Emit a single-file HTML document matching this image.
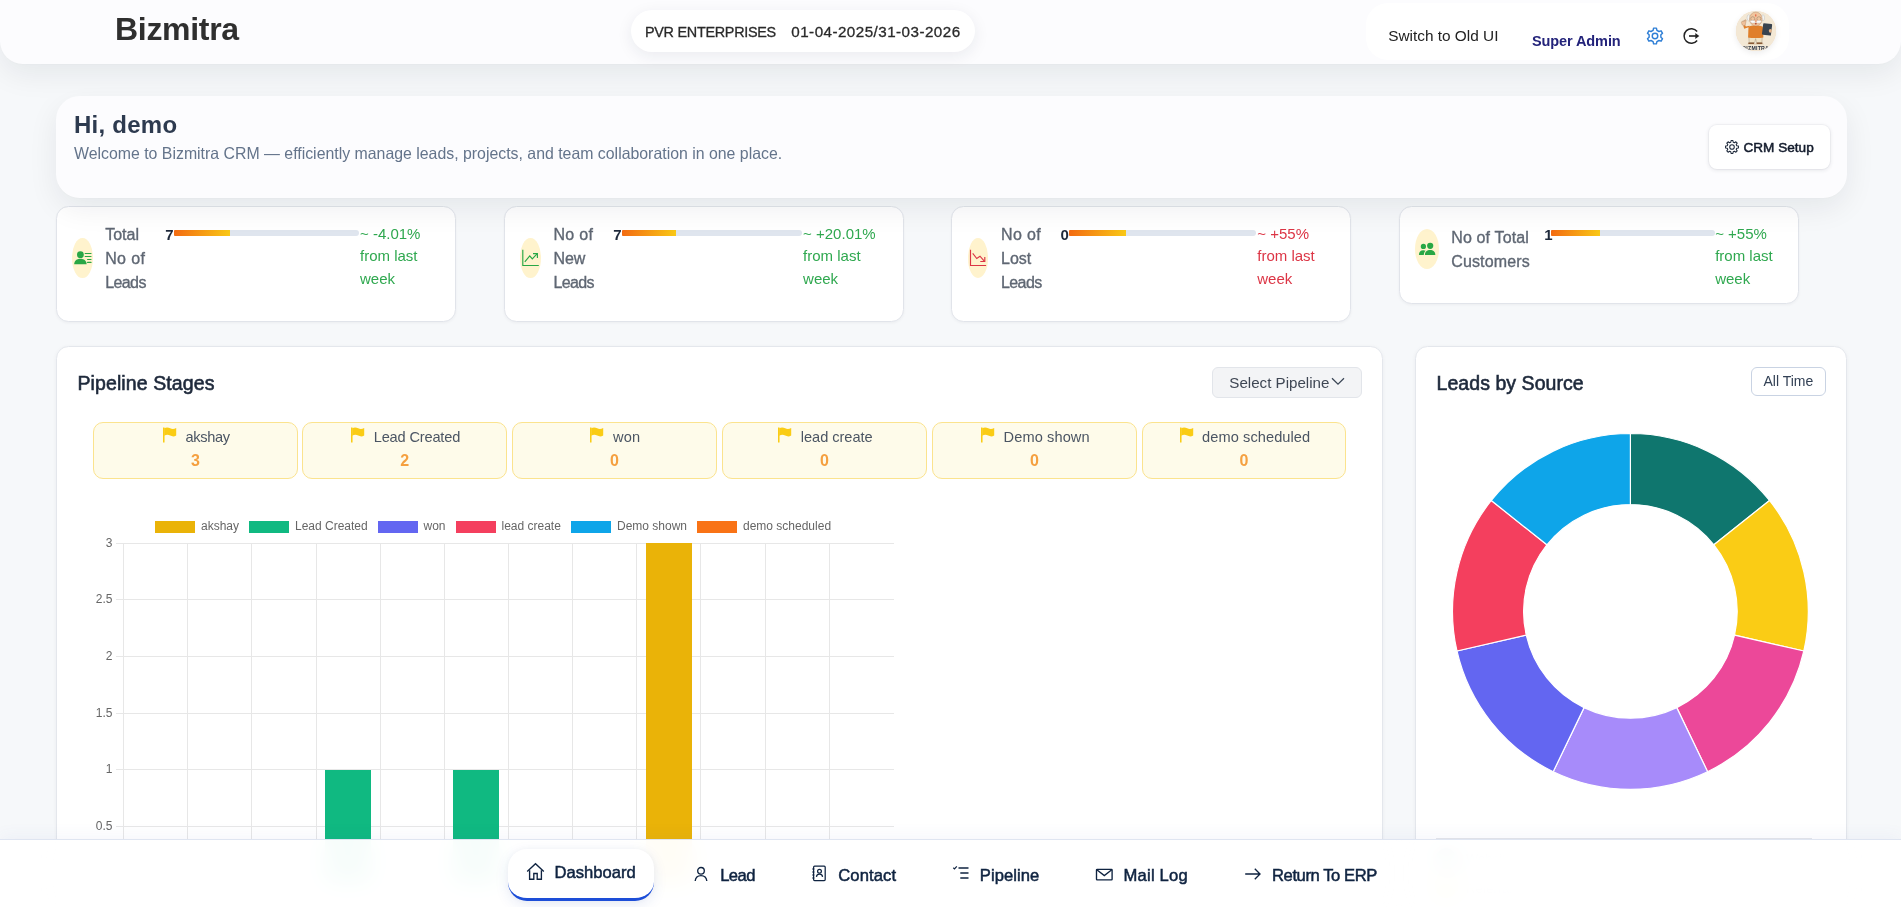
<!DOCTYPE html>
<html lang="en">
<head>
<meta charset="utf-8">
<title>Bizmitra CRM</title>
<style>
*{box-sizing:border-box;margin:0;padding:0}
html,body{width:1901px;height:907px;overflow:hidden}
body{font-family:"Liberation Sans",sans-serif;background:#f6f8fa;color:#1e293b;position:relative;will-change:opacity}
.abs{position:absolute}
/* header */
#hdr{position:absolute;left:0;top:0;width:1901px;height:64px;background:#fcfcfe;border-radius:0 0 23px 23px;box-shadow:0 10px 30px rgba(20,25,40,.075),0 1px 3px rgba(20,25,35,.02)}
#brand{position:absolute;left:115px;top:10px;font-size:32px;font-weight:700;color:#2f2f2f;letter-spacing:-.3px;line-height:38px}
#pill{position:absolute;left:631.300px;top:10.300px;width:344px;height:41.800px;border-radius:21px;background:#fff;box-shadow:0 4px 16px rgba(30,41,59,.08)}
#pill span{position:absolute;top:12.600px;font-size:14.4px;line-height:18px;color:#2a2a2a;white-space:nowrap;-webkit-text-stroke:.3px #2a2a2a}
#rbox{position:absolute;left:1366px;top:3px;width:423px;height:57px;border-radius:22px;background:#fff}
#sw{position:absolute;left:1388.200px;top:26.800px;font-size:15.38px;line-height:18px;color:#222;white-space:nowrap}
#sa{position:absolute;left:1532px;top:31.800px;letter-spacing:-.1px;font-size:14.5px;font-weight:700;line-height:18px;color:#23237a;white-space:nowrap}
#av{position:absolute;left:1736px;top:11px;width:40px;height:40px;border-radius:50%;background:#f6dcc0;overflow:hidden;box-shadow:0 2px 6px rgba(0,0,0,.08)}
/* welcome */
#wel{z-index:2;position:absolute;left:56px;top:96px;width:1790.600px;height:102px;border-radius:24px;background:#fcfcfe;box-shadow:0 10px 30px rgba(20,25,40,.075),0 1px 3px rgba(20,25,35,.02)}
#wel h1{position:absolute;left:18px;top:14px;letter-spacing:.25px;font-size:24px;line-height:30px;font-weight:700;color:#2d3a4f;white-space:nowrap}
#wel p{position:absolute;left:18px;top:48.800px;font-size:15.87px;line-height:18px;color:#64748b;white-space:nowrap}
#crm{position:absolute;left:1652.900px;top:29px;width:121.300px;height:43.500px;border-radius:8px;background:#fff;box-shadow:0 1px 4px rgba(30,41,59,.12),0 0 0 1px rgba(30,41,59,.03)}
#crm span{position:absolute;left:34.600px;top:13.900px;font-size:13.6px;font-weight:400;color:#131b2c;-webkit-text-stroke:.5px #131b2c;line-height:18px;white-space:nowrap}
/* stats */
.st{position:absolute;top:205.900px;width:400px;height:116px;border-radius:12.500px;background:#fff;border:1px solid #e1e4ea;box-shadow:0 1px 3px rgba(30,41,59,.05)}
.st .ov{position:absolute;left:15.200px;top:31px;width:20.800px;height:40px;border-radius:50%;background:#fff3cd}
.st .lb{position:absolute;left:48.100px;top:16.100px;font-size:16px;line-height:24px;color:#5f6773;font-weight:400;white-space:nowrap;-webkit-text-stroke:.35px #5f6773}
.st .nm{position:absolute;left:108.200px;top:19.100px;font-size:15px;font-weight:700;line-height:18px;color:#1e293b}
.st .bar{position:absolute;left:116.600px;top:22.900px;width:185px;height:6.200px;border-radius:1px 3px 3px 1px;background:#dfe5ee;overflow:hidden}
.st .bar i{display:block;height:7px;width:30.3%;background:linear-gradient(90deg,#f36b12,#f9c816)}
.st .ch{position:absolute;left:302.900px;top:16.100px;font-size:15px;line-height:22.5px;color:#2fa84f;white-space:nowrap}
.st.red .ch{color:#dc3545}

/* pipeline */
#pipe{position:absolute;left:56.100px;top:346.100px;width:1326.600px;height:600px;border-radius:12.500px;background:#fff;border:1px solid #e4e7ec;box-shadow:0 1px 4px rgba(30,41,59,.05)}
.ttl{position:absolute;font-size:19.5px;line-height:24px;color:#1e293b;white-space:nowrap;-webkit-text-stroke:.6px #1e293b}
#sel{position:absolute;left:1154.900px;top:19.900px;width:149.800px;height:30.600px;border-radius:6px;background:#f3f4f6;border:1px solid #e2e5ea}
#sel span{position:absolute;left:16.300px;top:5.800px;font-size:15.15px;line-height:18px;color:#3f4754;white-space:nowrap}
.sg{position:absolute;top:74.800px;width:204.6px;height:57px;border-radius:10px;background:#fefbea;border:1px solid #fbe38e;text-align:center}
.sg .r1{position:absolute;left:2px;right:0;top:4.300px;height:20px;font-size:14.6px;line-height:20px;color:#4b5563;white-space:nowrap}
.sg .r1 .fl{display:inline-block;vertical-align:top;margin-top:.1px;margin-right:8.500px}
.sg .r2{position:absolute;left:0;right:0;top:28.200px;font-size:16px;line-height:20px;font-weight:700;color:#f5a040}

/* source */
#src{position:absolute;left:1415.200px;top:346.100px;width:431.600px;height:600px;border-radius:12.500px;background:#fff;border:1px solid #e4e7ec;box-shadow:0 1px 4px rgba(30,41,59,.05)}
#allt{position:absolute;left:334.700px;top:19.700px;width:75px;height:29px;border-radius:6px;border:1px solid #c9d3e3;background:#fff;font-size:14px;line-height:27px;text-align:center;color:#334155}

/* nav */
#nav{position:absolute;left:0;top:839px;width:1901px;height:68px;background:rgba(255,255,255,.965);border-top:1px solid #dfe5f1;backdrop-filter:blur(12px);-webkit-backdrop-filter:blur(12px);box-shadow:0 -5px 14px rgba(70,100,190,.045)}
#dash{position:absolute;left:508px;top:848.500px;width:146px;height:52px;border-radius:19px;background:#fff;border-bottom:3px solid #1d4ed8;box-shadow:0 4px 14px rgba(30,64,175,.10),0 0 8px rgba(30,41,59,.04)}
.nt{position:absolute;font-size:16.6px;line-height:20px;color:#0f2340;white-space:nowrap;-webkit-text-stroke:.5px #0f2340}
#lg{position:absolute;left:1436px;top:838px;width:376px;height:80px;border-top:1px solid #e5e7eb}
.li{position:absolute;left:0;height:22px}
.li i{position:absolute;left:0;top:0;width:20px;height:20px;border-radius:50%}
.li span{position:absolute;left:30px;top:3px;font-size:13px;line-height:16px;color:#475569;white-space:nowrap}
</style>
</head>
<body>
<div id="hdr">
  <div id="brand">Bizmitra</div>
  <div id="pill"><span style="left:13.700px;letter-spacing:-.28px">PVR ENTERPRISES</span><span style="left:160px;font-size:15.2px;letter-spacing:.46px">01-04-2025/31-03-2026</span></div>
  <div id="rbox"></div>
  <div id="sw">Switch to Old UI</div>
  <div id="sa">Super Admin</div>
  <!--HI--><svg class="abs" style="left:1643.7px;top:24.900px" width="22" height="22" viewBox="0 0 22 22" fill="none" stroke="#2f7fd6" stroke-width="1.45" stroke-linejoin="round"><path d="M9.09 5.31L9.58 3.13L12.42 3.13L12.91 5.31L14.97 6.50L17.11 5.84L18.53 8.29L16.88 9.81L16.88 12.19L18.53 13.71L17.11 16.16L14.97 15.50L12.91 16.69L12.42 18.87L9.58 18.87L9.09 16.69L7.03 15.50L4.89 16.16L3.47 13.71L5.12 12.19L5.12 9.81L3.47 8.29L4.89 5.84L7.03 6.50Z"/><circle cx="11" cy="11" r="2.750"/></svg><svg class="abs" style="left:1680px;top:24.900px" width="24" height="22" viewBox="0 0 24 22" fill="none" stroke="#222" stroke-width="1.45"><path d="M17.15 6.51A7.3 7.3 0 1 0 17.15 15.49"/><path d="M9 11h8.500" stroke-width="1.6"/><path d="M15.300 8.100l4 2.900-4 2.900z" fill="#222" stroke="none"/></svg><!--/HI--><div id="av"><svg width="40" height="40" viewBox="0 0 40 40">
<rect width="40" height="40" fill="#f3e8d5"/>
<ellipse cx="19.700" cy="33" rx="8.500" ry="1" fill="#e6d6bb"/>
<path d="M12.800 26h13.400l-.3 5.600h-5.400l-.9-4-.9 4h-5.500z" fill="#efe3c6" stroke="#8b7b62" stroke-width=".35"/>
<path d="M12.300 31.400h5.800v1.500h-5.800zM20.600 31.400h5.800v1.500h-5.800z" fill="#8a5a35"/>
<path d="M12.500 15.800c2-1.600 12.200-1.600 14.300 0l.6 10.600c-4 .9-11.300.9-15.300 0z" fill="#e07f2a"/>
<path d="M13.200 16l-5 1.700-1-3.100 1.800-.5.900 1.300 3.700-.6z" fill="#e07f2a"/>
<path d="M5.400 11.200c.5-1.300 1.500-1.300 1.800-.2l.6-1.700c.5-.4 1 .2.900 1l.6-1.600c.6-.3 1 .4.800 1.200l-.9 4.300c-1.400.9-2.900.3-3.300-1z" fill="#efc19b" stroke="#9a6b45" stroke-width=".3"/>
<rect x="26.600" y="12.600" width="9" height="11.600" rx=".8" transform="rotate(7 31 18)" fill="#38434f"/>
<ellipse cx="34.300" cy="19.800" rx="1.500" ry="1.900" fill="#e6b48a"/>
<ellipse cx="12.600" cy="6.800" rx="1.500" ry="3" fill="#f4f4f2" stroke="#9aa0a6" stroke-width=".3"/>
<ellipse cx="27" cy="6.800" rx="1.500" ry="3" fill="#f4f4f2" stroke="#9aa0a6" stroke-width=".3"/>
<ellipse cx="19.800" cy="8" rx="6.400" ry="7" fill="#f0c59e" stroke="#9a6b45" stroke-width=".3"/>
<rect x="19.300" y="3.200" width="1" height="2.400" rx=".5" fill="#e24a2c"/>
<circle cx="16.700" cy="7.700" r="2" fill="none" stroke="#7a6a58" stroke-width=".4"/>
<circle cx="22.900" cy="7.700" r="2" fill="none" stroke="#7a6a58" stroke-width=".4"/>
<path d="M14 10.200c1.500-1.300 4.200-1 5.800.3 1.600-1.300 4.300-1.600 5.800-.3-.8 2.200-3.800 2.400-5.800 1-2 1.400-5 1.200-5.800-1z" fill="#fafafa" stroke="#a9a29a" stroke-width=".25"/>
<ellipse cx="19.800" cy="9.700" rx="1" ry="1.600" fill="#e8a987"/>
<ellipse cx="19.800" cy="12.700" rx="1" ry=".8" fill="#b4432f"/>
<text x="19.700" y="39.200" font-family="Liberation Sans, sans-serif" font-weight="700" font-size="5.200" text-anchor="middle" fill="#27303f" letter-spacing=".25">BIZMITRA</text>
</svg></div>
</div>

<div id="wel">
  <h1>Hi, demo</h1>
  <p>Welcome to Bizmitra CRM — efficiently manage leads, projects, and team collaboration in one place.</p>
  <div id="crm"><svg class="abs" style="left:14.500px;top:12.600px" width="18" height="18" viewBox="0 0 18 18" fill="none" stroke="#1e293b" stroke-width="1.050" stroke-linejoin="round"><path d="M7.78 4.25L8.08 2.56L9.92 2.56L10.22 4.25L11.49 4.78L12.90 3.80L14.20 5.10L13.22 6.51L13.75 7.78L15.44 8.08L15.44 9.92L13.75 10.22L13.22 11.49L14.20 12.90L12.90 14.20L11.49 13.22L10.22 13.75L9.92 15.44L8.08 15.44L7.78 13.75L6.51 13.22L5.10 14.20L3.80 12.90L4.78 11.49L4.25 10.22L2.56 9.92L2.56 8.08L4.25 7.78L4.78 6.51L3.80 5.10L5.10 3.80L6.51 4.78Z"/><circle cx="9" cy="9" r="2.300"/></svg><span>CRM Setup</span></div>
</div>

<div class="st" style="left:56.100px">
  <div class="ov"></div><svg class="abs" style="left:14.900px;top:42.100px" width="22" height="18" viewBox="72 249 22 18"><circle cx="80.400" cy="254.700" r="3.400" fill="#28a745"/><path d="M74.200 264.200c0-3.300 2.600-5.500 6.200-5.500s6.200 2.200 6.200 5.500z" fill="#28a745"/><path d="M85.200 253.500h5.800M85.200 256.500h5.800M87.600 259.500h3.400M87.600 262.400h3.400" stroke="#28a745" stroke-width="1.200" stroke-linecap="round"/></svg>
  <div class="lb">Total<br><span style="letter-spacing:.35px">No of</span><br><span style="letter-spacing:-.6px">Leads</span></div>
  <div class="nm">7</div><div class="bar"><i></i></div>
  <div class="ch">~ -4.01%<br>from last<br>week</div>
</div>
<div class="st" style="left:503.800px">
  <div class="ov"></div><svg class="abs" style="left:15.200px;top:41.100px" width="22" height="20" viewBox="520 248 22 20" fill="none" stroke="#28a745" stroke-width="1.150"><path d="M522.800 249.800v15.700h16"/><path d="M524.800 261.800l4.950-6 2.550 3.100 4.700-5"/><path d="M533 253.600h4.400v4.400" stroke-linejoin="miter"/></svg>
  <div class="lb" style="left:48.600px"><span style="letter-spacing:.35px">No of</span><br>New<br><span style="letter-spacing:-.6px">Leads</span></div>
  <div class="nm" style="left:108.500px">7</div><div class="bar" style="left:117px;width:180.200px"><i></i></div>
  <div class="ch" style="left:298.300px">~ +20.01%<br>from last<br>week</div>
</div>
<div class="st red" style="left:951.400px">
  <div class="ov"></div><svg class="abs" style="left:14.600px;top:41.100px" width="22" height="20" viewBox="967 248 22 20" fill="none" stroke="#dc3545" stroke-width="1.150"><path d="M970.500 249.800v15.700h15.600"/><path d="M972.700 253.300l4.050 5.200 3.250-2.300 4.500 5.200"/><path d="M980.300 261.500h4.500v-4.500" stroke-linejoin="miter"/></svg>
  <div class="lb" style="left:48.600px"><span style="letter-spacing:.35px">No of</span><br>Lost<br><span style="letter-spacing:-.6px">Leads</span></div>
  <div class="nm">0</div><div class="bar" style="width:186.800px"><i></i></div>
  <div class="ch" style="left:304.900px">~ +55%<br>from last<br>week</div>
</div>
<div class="st" style="left:1399.400px;height:98.400px" id="st4">
  <div class="ov" style="top:21.800px;left:14.600px;width:24px"></div><svg class="abs" style="left:14.600px;top:32.100px" width="24" height="18" viewBox="1415 239 24 18"><circle cx="1423.400" cy="246.400" r="2.600" fill="#28a745"/><path d="M1418.900 254.900c0-2.900 1.700-4.700 4.400-4.700.9 0 1.700.2 2.300.6-1.100 1-1.700 2.400-1.800 4.100z" fill="#28a745"/><circle cx="1430.200" cy="245.800" r="3.100" fill="#28a745"/><path d="M1424.900 254.900c0-2.900 2.100-4.800 5.200-4.800s5.200 1.900 5.200 4.800z" fill="#28a745"/></svg>
  <div class="lb" style="top:19.100px;left:50.800px;letter-spacing:.15px">No of Total<br>Customers</div>
  <div class="nm" style="left:143.800px">1</div><div class="bar" style="left:150.400px;width:164px"><i></i></div>
  <div class="ch" style="left:314.800px">~ +55%<br>from last<br>week</div>
</div>

<div id="pipe">
  <div class="ttl" style="left:20.400px;top:24.300px;letter-spacing:.1px">Pipeline Stages</div>
  <div id="sel"><span>Select Pipeline</span><svg width="14" height="9" viewBox="0 0 14 9" style="position:absolute;left:118.500px;top:9.300px"><path d="M1 1.200l6 6 6-6" fill="none" stroke="#3b4656" stroke-width="1.25"/></svg></div>
<div class="sg" style="left:35.70px;width:205.30px"><div class="r1"><svg class="fl" width="14" height="16" viewBox="0 0 14 16"><path d="M0.6 0.4v15.2" stroke="#facc15" stroke-width="1.9" fill="none"/><path d="M1.2 1.3c2.3-1.3 4.2-.9 6 0s3.700 1.0 6-.3v7.600c-2.3 1.300-4.200.9-6 0s-3.700-1.200-6 .2z" fill="#facc15"/></svg><span style="letter-spacing:-0.327px">akshay</span></div><div class="r2">3</div></div>
<div class="sg" style="left:245.40px;width:204.40px"><div class="r1"><svg class="fl" width="14" height="16" viewBox="0 0 14 16"><path d="M0.6 0.4v15.2" stroke="#facc15" stroke-width="1.9" fill="none"/><path d="M1.2 1.3c2.3-1.3 4.2-.9 6 0s3.700 1.0 6-.3v7.600c-2.3 1.300-4.200.9-6 0s-3.700-1.200-6 .2z" fill="#facc15"/></svg><span style="letter-spacing:-0.165px">Lead Created</span></div><div class="r2">2</div></div>
<div class="sg" style="left:454.80px;width:205.10px"><div class="r1"><svg class="fl" width="14" height="16" viewBox="0 0 14 16"><path d="M0.6 0.4v15.2" stroke="#facc15" stroke-width="1.9" fill="none"/><path d="M1.2 1.3c2.3-1.3 4.2-.9 6 0s3.700 1.0 6-.3v7.600c-2.3 1.300-4.200.9-6 0s-3.700-1.200-6 .2z" fill="#facc15"/></svg><span style="letter-spacing:0.272px">won</span></div><div class="r2">0</div></div>
<div class="sg" style="left:665.10px;width:204.60px"><div class="r1"><svg class="fl" width="14" height="16" viewBox="0 0 14 16"><path d="M0.6 0.4v15.2" stroke="#facc15" stroke-width="1.9" fill="none"/><path d="M1.2 1.3c2.3-1.3 4.2-.9 6 0s3.700 1.0 6-.3v7.600c-2.3 1.300-4.200.9-6 0s-3.700-1.200-6 .2z" fill="#facc15"/></svg><span style="letter-spacing:-0.040px">lead create</span></div><div class="r2">0</div></div>
<div class="sg" style="left:874.90px;width:204.80px"><div class="r1"><svg class="fl" width="14" height="16" viewBox="0 0 14 16"><path d="M0.6 0.4v15.2" stroke="#facc15" stroke-width="1.9" fill="none"/><path d="M1.2 1.3c2.3-1.3 4.2-.9 6 0s3.700 1.0 6-.3v7.600c-2.3 1.300-4.200.9-6 0s-3.700-1.200-6 .2z" fill="#facc15"/></svg><span style="letter-spacing:0.099px">Demo shown</span></div><div class="r2">0</div></div>
<div class="sg" style="left:1084.90px;width:203.90px"><div class="r1"><svg class="fl" width="14" height="16" viewBox="0 0 14 16"><path d="M0.6 0.4v15.2" stroke="#facc15" stroke-width="1.9" fill="none"/><path d="M1.2 1.3c2.3-1.3 4.2-.9 6 0s3.700 1.0 6-.3v7.600c-2.3 1.300-4.200.9-6 0s-3.700-1.200-6 .2z" fill="#facc15"/></svg><span style="letter-spacing:0.076px">demo scheduled</span></div><div class="r2">0</div></div>
</div>
<svg id="chart" class="abs" style="left:0;top:500px" width="1000" height="407" viewBox="0 500 1000 407" shape-rendering="crispEdges" font-family="Liberation Sans, sans-serif">
<line x1="116" x2="893.5" y1="543.5" y2="543.5" stroke="#e7e7e7"/>
<line x1="116" x2="893.5" y1="599.5" y2="599.5" stroke="#e7e7e7"/>
<line x1="116" x2="893.5" y1="656.5" y2="656.5" stroke="#e7e7e7"/>
<line x1="116" x2="893.5" y1="713.5" y2="713.5" stroke="#e7e7e7"/>
<line x1="116" x2="893.5" y1="769.5" y2="769.5" stroke="#e7e7e7"/>
<line x1="116" x2="893.5" y1="826.5" y2="826.5" stroke="#e7e7e7"/>
<line x1="116" x2="893.5" y1="882.5" y2="882.5" stroke="#e7e7e7"/>
<line x1="123.5" x2="123.5" y1="543.5" y2="889" stroke="#e7e7e7"/>
<line x1="187.5" x2="187.5" y1="543.5" y2="889" stroke="#e7e7e7"/>
<line x1="251.5" x2="251.5" y1="543.5" y2="889" stroke="#e7e7e7"/>
<line x1="316.5" x2="316.5" y1="543.5" y2="889" stroke="#e7e7e7"/>
<line x1="380.5" x2="380.5" y1="543.5" y2="889" stroke="#e7e7e7"/>
<line x1="444.5" x2="444.5" y1="543.5" y2="889" stroke="#e7e7e7"/>
<line x1="508.5" x2="508.5" y1="543.5" y2="889" stroke="#e7e7e7"/>
<line x1="572.5" x2="572.5" y1="543.5" y2="889" stroke="#e7e7e7"/>
<line x1="636.5" x2="636.5" y1="543.5" y2="889" stroke="#e7e7e7"/>
<line x1="700.5" x2="700.5" y1="543.5" y2="889" stroke="#e7e7e7"/>
<line x1="765.5" x2="765.5" y1="543.5" y2="889" stroke="#e7e7e7"/>
<line x1="829.5" x2="829.5" y1="543.5" y2="889" stroke="#e7e7e7"/>
<rect x="325" y="770" width="46" height="113" fill="#10b981"/>
<rect x="453" y="770" width="46" height="113" fill="#10b981"/>
<rect x="646" y="543" width="46" height="340" fill="#eab308"/>
<rect x="155" y="521" width="40" height="12" fill="#eab308"/>
<text x="201" y="530.3" font-size="12" fill="#666">akshay</text>
<rect x="249" y="521" width="40" height="12" fill="#10b981"/>
<text x="295" y="530.3" font-size="12" fill="#666">Lead Created</text>
<rect x="377.5" y="521" width="40" height="12" fill="#6366f1"/>
<text x="423.5" y="530.3" font-size="12" fill="#666">won</text>
<rect x="455.5" y="521" width="40" height="12" fill="#f43f5e"/>
<text x="501.5" y="530.3" font-size="12" fill="#666">lead create</text>
<rect x="571" y="521" width="40" height="12" fill="#0ea5e9"/>
<text x="617" y="530.3" font-size="12" fill="#666">Demo shown</text>
<rect x="697" y="521" width="40" height="12" fill="#f97316"/>
<text x="743" y="530.3" font-size="12" fill="#666">demo scheduled</text>
<text x="112.5" y="546.7" font-size="12" fill="#666" text-anchor="end">3</text>
<text x="112.5" y="603.3" font-size="12" fill="#666" text-anchor="end">2.5</text>
<text x="112.5" y="659.9" font-size="12" fill="#666" text-anchor="end">2</text>
<text x="112.5" y="716.5" font-size="12" fill="#666" text-anchor="end">1.5</text>
<text x="112.5" y="773.1" font-size="12" fill="#666" text-anchor="end">1</text>
<text x="112.5" y="829.7" font-size="12" fill="#666" text-anchor="end">0.5</text>
</svg>
<!--PIPE-->
<div id="src">
  <div class="ttl" style="left:20.400px;top:24.300px;letter-spacing:.05px">Leads by Source</div>
  <div id="allt">All Time</div>
</div>
<svg id="donut" class="abs" style="left:1440px;top:425px" width="380" height="380" viewBox="1440 425 380 380">
<path d="M1630.40 433.50A177.9 177.9 0 0 1 1769.49 500.48L1713.90 544.81A106.8 106.8 0 0 0 1630.40 504.60Z" fill="#0f766e" stroke="#fff" stroke-width="1.2" stroke-linejoin="round"/>
<path d="M1769.49 500.48A177.9 177.9 0 0 1 1803.84 650.99L1734.52 635.17A106.8 106.8 0 0 0 1713.90 544.81Z" fill="#facc15" stroke="#fff" stroke-width="1.2" stroke-linejoin="round"/>
<path d="M1803.84 650.99A177.9 177.9 0 0 1 1707.59 771.68L1676.74 707.62A106.8 106.8 0 0 0 1734.52 635.17Z" fill="#ec4899" stroke="#fff" stroke-width="1.2" stroke-linejoin="round"/>
<path d="M1707.59 771.68A177.9 177.9 0 0 1 1553.21 771.68L1584.06 707.62A106.8 106.8 0 0 0 1676.74 707.62Z" fill="#a78bfa" stroke="#fff" stroke-width="1.2" stroke-linejoin="round"/>
<path d="M1553.21 771.68A177.9 177.9 0 0 1 1456.96 650.99L1526.28 635.17A106.8 106.8 0 0 0 1584.06 707.62Z" fill="#6366f1" stroke="#fff" stroke-width="1.2" stroke-linejoin="round"/>
<path d="M1456.96 650.99A177.9 177.9 0 0 1 1491.31 500.48L1546.90 544.81A106.8 106.8 0 0 0 1526.28 635.17Z" fill="#f43f5e" stroke="#fff" stroke-width="1.2" stroke-linejoin="round"/>
<path d="M1491.31 500.48A177.9 177.9 0 0 1 1630.40 433.50L1630.40 504.60A106.8 106.8 0 0 0 1546.90 544.81Z" fill="#0ea5e9" stroke="#fff" stroke-width="1.2" stroke-linejoin="round"/>
</svg>
<div id="lg"><div class="li" style="top:9px"><i style="background:#0f766e"></i><span>Website</span></div><div class="li" style="top:39px"><i style="background:#facc15"></i><span>Referral</span></div></div>
<!--SRC-->
<!--NAVS-->
<div id="nav"></div><div id="dash"></div>
<svg class="abs" style="left:526px;top:862px" width="19" height="19" viewBox="0 0 19 19" fill="none" stroke="#0f2340" stroke-width="1.35" stroke-linejoin="miter"><path d="M1.2 9.600L9.5 1.800l8.300 7.800"/><path d="M3.600 8.200v9h4.200v-5.700h3.400v5.700h4.200v-9"/></svg>
<div class="nt" style="left:554.6px;top:863.2px;letter-spacing:-0.001px">Dashboard</div>
<svg class="abs" style="left:693px;top:866px" width="16" height="16" viewBox="0 0 16 16" fill="none" stroke="#0f2340" stroke-width="1.35"><circle cx="8" cy="4.800" r="3.300"/><path d="M2.200 15c.3-3.600 2.700-5.400 5.800-5.400s5.500 1.800 5.800 5.400"/></svg>
<div class="nt" style="left:720.2px;top:866px;letter-spacing:-0.582px">Lead</div>
<svg class="abs" style="left:811px;top:864px" width="16" height="18" viewBox="0 0 16 18" fill="none" stroke="#0f2340" stroke-width="1.25"><rect x="2.600" y="2.200" width="11.600" height="14.300" rx="1"/><path d="M1.200 5h2.200M1.200 8h2.200M1.200 11h2.200M1.200 14h2.200" stroke-width="1.1"/><circle cx="8.500" cy="7.300" r="1.900"/><path d="M5.400 12.800c.3-1.900 1.500-2.700 3.100-2.700s2.800.8 3.100 2.700"/></svg>
<div class="nt" style="left:838.2px;top:866px;letter-spacing:0.127px">Contact</div>
<svg class="abs" style="left:952px;top:865px" width="18" height="16" viewBox="0 0 18 16" fill="none" stroke="#0f2340" stroke-width="1.35"><path d="M6.500 3h10M8.300 8h8.200M8.300 13h8.200"/><path d="M1.300 2.800l1.200 1.100 2.300-2.500" stroke-width="1.2"/></svg>
<div class="nt" style="left:979.8px;top:866px;letter-spacing:0.067px">Pipeline</div>
<svg class="abs" style="left:1095px;top:868px" width="19" height="14" viewBox="0 0 19 14" fill="none" stroke="#0f2340" stroke-width="1.35"><rect x="1.500" y="1.300" width="15.600" height="10.600" rx=".6"/><path d="M1.800 1.800l7.500 5.800 7.500-5.800"/></svg>
<div class="nt" style="left:1123.6px;top:866px;letter-spacing:0.194px">Mail Log</div>
<svg class="abs" style="left:1244px;top:867px" width="18" height="14" viewBox="0 0 18 14" fill="none" stroke="#0f2340" stroke-width="1.35"><path d="M1.200 7h14.600M10.800 1.800l5.200 5.200-5.200 5.200"/></svg>
<div class="nt" style="left:1272px;top:866px;letter-spacing:-0.416px">Return To ERP</div>
<!--NAVE-->
<!--NAV-->
</body>
</html>
